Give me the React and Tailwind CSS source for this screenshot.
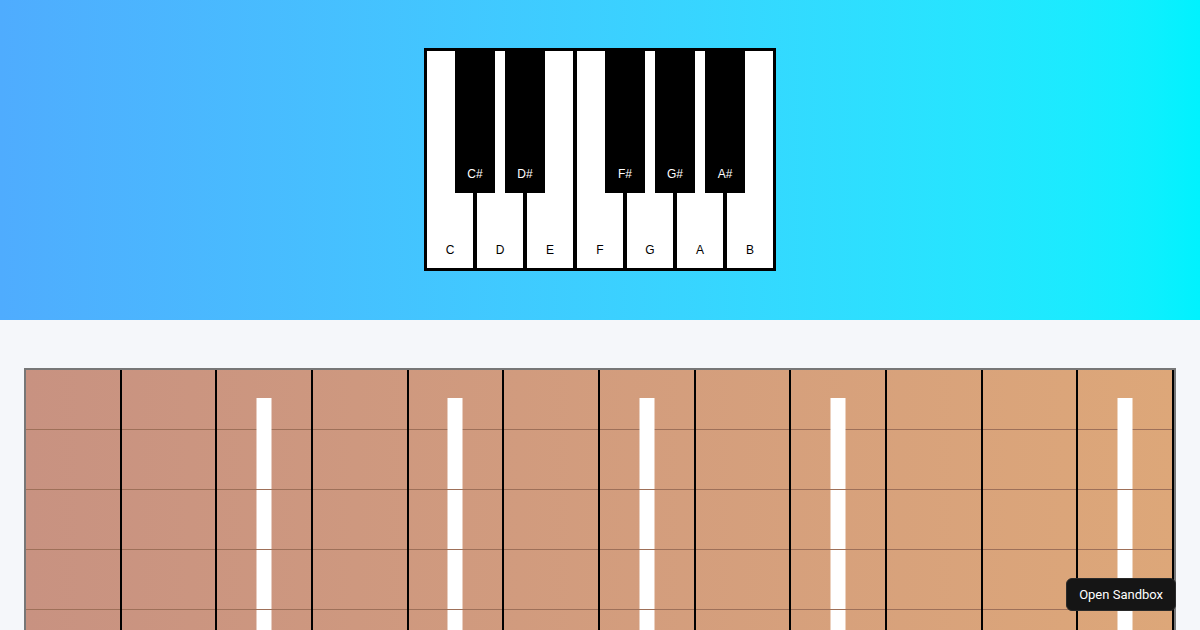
import React from 'react'

const whiteKeys = ['C', 'D', 'E', 'F', 'G', 'A', 'B']
const blackKeys = [
    { note: 'C#', left: 'left-[30px]' },
    { note: 'D#', left: 'left-[80px]' },
    { note: 'F#', left: 'left-[180px]' },
    { note: 'G#', left: 'left-[230px]' },
    { note: 'A#', left: 'left-[280px]' },
]

// frets that carry an inlay marker
const markers = [3, 5, 7, 9, 12]
const frets = Array.from({ length: 12 }, (_, i) => i + 1)
const strings = [1, 2, 3, 4, 5, 6]

const Piano = () => (
    <div className="relative flex border border-black font-['Liberation_Sans',Arial,sans-serif]">
        {whiteKeys.map((k) => (
            <div key={k} className="w-[50px] h-[221px] border-2 border-black bg-white flex items-end justify-center pb-[10px]">
                <span className="text-[12px] leading-4 text-black">{k}</span>
            </div>
        ))}
        {blackKeys.map((k) => (
            <div key={k.note} className={`absolute top-0 ${k.left} w-[40px] h-[144px] bg-black flex items-end justify-center pb-[11px]`}>
                <span className="text-[12px] leading-4 text-white">{k.note}</span>
            </div>
        ))}
    </div>
)

const Fretboard = () => (
    <div className="mx-6 mt-12 border-2 border-[#777777] bg-gradient-to-r from-[#c89281] to-[#dda779] grid grid-cols-12">
        {frets.map((f) => (
            <div key={f} className="border-r-2 border-black">
                {strings.map((s) => (
                    <div key={s} className="relative h-[60px] border-b border-[#9e7059]">
                        {s === 1 && markers.includes(f) && (
                            <div className="absolute top-[28px] left-1/2 -translate-x-1/2 w-[15px] h-[400px] bg-white" />
                        )}
                    </div>
                ))}
            </div>
        ))}
    </div>
)

export default function App() {
    return (
        <div className="min-h-screen bg-[#f5f7fa]">
            <div className="h-[320px] bg-gradient-to-r from-[#4facfe] to-[#00f2fe] flex justify-center pt-12">
                <div>
                    <Piano />
                </div>
            </div>
            <Fretboard />
            <button className="fixed right-6 bottom-[19px] h-[33px] px-3 rounded-md bg-[#151515] border border-[#2a2a2a] text-white text-[13px] font-['Roboto',sans-serif]">
                Open Sandbox
            </button>
        </div>
    )
}
